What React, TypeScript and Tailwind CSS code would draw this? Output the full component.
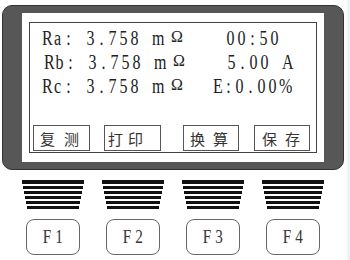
import React from 'react';

const serif = { fontFamily: '"Liberation Serif", "DejaVu Serif", serif' };
const cjk = { fontFamily: '"Noto Sans CJK SC", "Noto Sans", sans-serif' };

// 液晶字符：每个字符占一个等宽格
const Cells = ({ text, w = 'w-[11px]' }: { text: string; w?: string }) => (
  <>
    {text.split('').map((ch, i) => (
      <span key={i} className={`inline-block ${w} text-center scale-x-[0.8]`}>
        {ch === ' ' ? '\u00a0' : ch}
      </span>
    ))}
  </>
);

const rows = [
  { label: 'Ra:', shift: 'ml-0', leftW: 'w-[184px]', right: '00:50' },
  { label: 'Rb:', shift: 'ml-[2px]', leftW: 'w-[183px]', right: '5.00 A' },
  { label: 'Rc:', shift: 'ml-0', leftW: 'w-[171px]', right: 'E:0.00%' },
];

const softKeys = [
  { text: '复测', cls: 'ml-[3px] w-[57px] pl-[6px] tracking-[9px]' },
  { text: '打印', cls: 'ml-[14px] w-[57px] pl-[3px] tracking-[5px]' },
  { text: '换算', cls: 'ml-[22px] w-[56px] pl-[6px] tracking-[8px]' },
  { text: '保存', cls: 'ml-[15px] w-[56px] pl-[7px] tracking-[8px]' },
];

const bars = [
  { w: 'w-[62px]', h: 'h-[4px]' },
  { w: 'w-[60px]', h: 'h-[3px]' },
  { w: 'w-[58px]', h: 'h-[3px]' },
  { w: 'w-[56px]', h: 'h-[3px]' },
  { w: 'w-[54px]', h: 'h-[3px]' },
  { w: 'w-[52px]', h: 'h-[3px]' },
];

export default function App() {
  return (
    <div className="flex w-[350px] h-[260px] bg-white overflow-hidden">
      <div className="flex flex-col w-[347px]">
        {/* 仪器面板 */}
        <div className="mt-[5px] ml-[2px] w-[342px] h-[165px] bg-[#575757] border border-[#333] rounded-[10px] px-[19px] py-[7px]">
          <div className="h-full bg-white px-[7px] py-[9px]">
            <div className="h-full border border-[#444] flex flex-col text-[#222]">
              <div className="pt-[4px] pl-[11px] text-[20px] leading-[23px]" style={serif}>
                {rows.map((r) => (
                  <div key={r.label} className={`flex whitespace-nowrap ${r.shift}`}>
                    <span className={`${r.leftW} shrink-0`}>
                      <Cells text={`${r.label} 3.758 m`} />
                      <span className="inline-block ml-[9px] text-[16px] -translate-y-[3px]">Ω</span>
                    </span>
                    <span>
                      <Cells text={r.right} />
                    </span>
                  </div>
                ))}
              </div>
              <div className="mt-auto mb-[1px] flex">
                {softKeys.map((k) => (
                  <div
                    key={k.text}
                    className={`${k.cls} h-[26px] border border-[#555] flex items-center whitespace-nowrap overflow-hidden text-[15px] text-[#333] leading-none`}
                    style={cjk}
                  >
                    {k.text}
                  </div>
                ))}
              </div>
            </div>
          </div>
        </div>

        {/* 功能键 */}
        <div className="flex ml-[13px] mt-[10px]">
          {['F1', 'F2', 'F3', 'F4'].map((f) => (
            <div key={f} className="w-[80px] flex flex-col items-center">
              <div className="flex flex-col items-center gap-[2px]">
                {bars.map((b, i) => (
                  <div key={i} className={`${b.w} ${b.h} bg-[#111]`} />
                ))}
              </div>
              <div
                className="mt-[10px] w-[54px] h-[36px] border border-[#666] rounded-[8px] flex items-center justify-center text-[19px] text-[#333]"
                style={serif}
              >
                <Cells text={f} w="w-[12px]" />
              </div>
            </div>
          ))}
        </div>
      </div>
      <div className="w-[3px] bg-[#eef3fb]" />
    </div>
  );
}
